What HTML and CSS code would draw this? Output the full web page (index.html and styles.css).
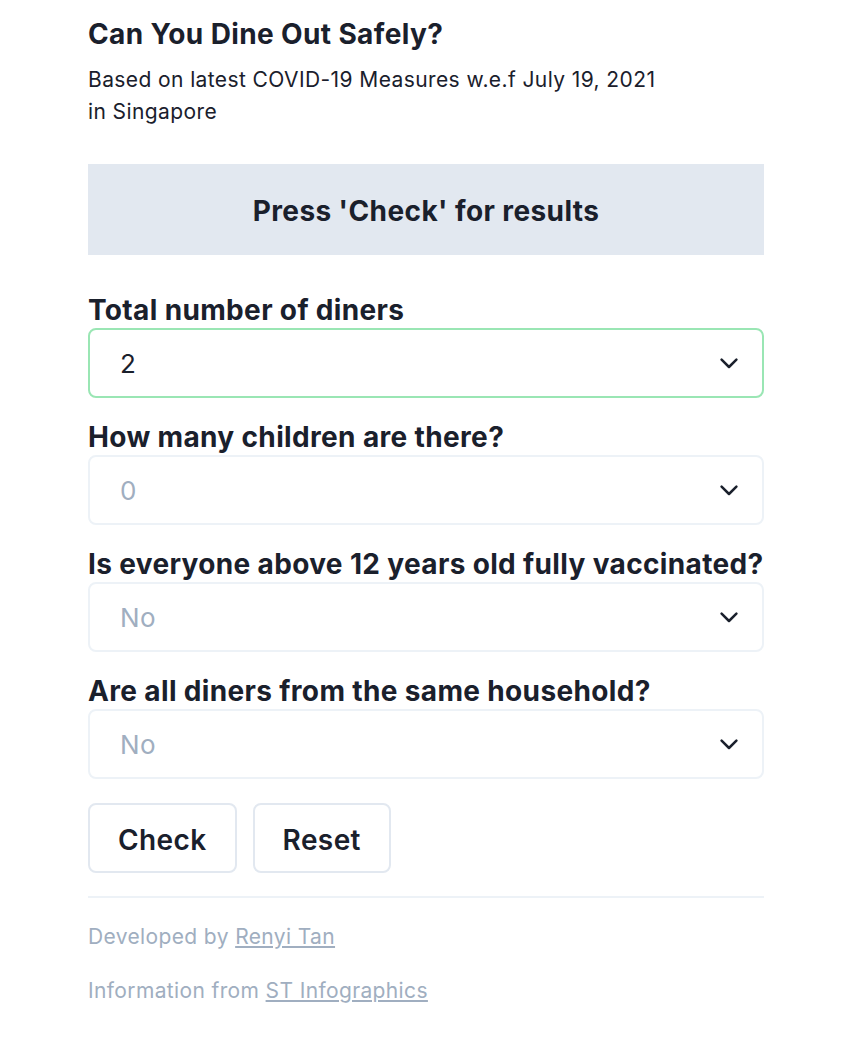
FILE: index.html
```html
<!DOCTYPE html>
<html lang="en">
<head>
<meta charset="utf-8">
<title>Can You Dine Out Safely?</title>
<link rel="stylesheet" href="styles.css">
</head>
<body>
<main class="page">
  <h1 class="title">Can You Dine Out Safely?</h1>
  <p class="subtitle">Based on latest COVID-19 Measures w.e.f July 19, 2021<br>in Singapore</p>

  <div class="result">Press 'Check' for results</div>

  <form class="form">
    <div class="field">
      <label class="label">Total number of diners</label>
      <div class="select focused">
        <span class="value">2</span>
        <svg class="chev" viewBox="0 0 18 11" width="18" height="11"><path d="M1.6 1.6L9 9l7.4-7.4" fill="none" stroke="#1a202c" stroke-width="2.5" stroke-linecap="round" stroke-linejoin="round"/></svg>
      </div>
    </div>
    <div class="field">
      <label class="label">How many children are there?</label>
      <div class="select">
        <span class="value muted">0</span>
        <svg class="chev" viewBox="0 0 18 11" width="18" height="11"><path d="M1.6 1.6L9 9l7.4-7.4" fill="none" stroke="#1a202c" stroke-width="2.5" stroke-linecap="round" stroke-linejoin="round"/></svg>
      </div>
    </div>
    <div class="field">
      <label class="label">Is everyone above 12 years old fully vaccinated?</label>
      <div class="select">
        <span class="value muted">No</span>
        <svg class="chev" viewBox="0 0 18 11" width="18" height="11"><path d="M1.6 1.6L9 9l7.4-7.4" fill="none" stroke="#1a202c" stroke-width="2.5" stroke-linecap="round" stroke-linejoin="round"/></svg>
      </div>
    </div>
    <div class="field">
      <label class="label">Are all diners from the same household?</label>
      <div class="select">
        <span class="value muted">No</span>
        <svg class="chev" viewBox="0 0 18 11" width="18" height="11"><path d="M1.6 1.6L9 9l7.4-7.4" fill="none" stroke="#1a202c" stroke-width="2.5" stroke-linecap="round" stroke-linejoin="round"/></svg>
      </div>
    </div>
    <div class="buttons">
      <button type="button" class="btn btn-check">Check</button>
      <button type="button" class="btn btn-reset">Reset</button>
    </div>
  </form>

  <hr class="divider">

  <footer class="footer">
    <p class="credit">Developed by <a href="#">Renyi Tan</a></p>
    <p class="credit">Information from <a href="#">ST Infographics</a></p>
  </footer>
</main>
</body>
</html>
```

FILE: styles.css
```css
* { box-sizing: border-box; }
html, body { margin: 0; padding: 0; background: #ffffff; }
body {
  font-family: Inter, "Noto Sans", "Liberation Sans", sans-serif;
  color: #1a202c;
}
.page {
  width: 676px;
  margin: 0 auto;
  padding-top: 17px;
}
.title {
  margin: 0;
  font-size: 28px;
  line-height: 34px;
  font-weight: 700;
  letter-spacing: 0.37px;
}
.subtitle {
  margin: 13px 0 0;
  font-size: 21px;
  line-height: 32px;
  font-weight: 400;
  letter-spacing: 0.4px;
}
.result {
  margin-top: 36px;
  height: 91px;
  padding-top: 3px;
  background: #e2e8f0;
  display: flex;
  align-items: center;
  justify-content: center;
  font-size: 28px;
  font-weight: 700;
  letter-spacing: 0.4px;
}
.form {
  margin-top: 37px;
  display: flex;
  flex-direction: column;
  gap: 21px;
}
.field {
  display: flex;
  flex-direction: column;
}
.label {
  font-size: 28px;
  line-height: 36px;
  font-weight: 700;
  letter-spacing: 0.35px;
}
.select {
  height: 70px;
  border: 2px solid #edf2f7;
  border-radius: 8px;
  display: flex;
  align-items: center;
  justify-content: space-between;
  padding: 0 24px 0 30px;
}
.select.focused { border-color: #9ae6b4; }
.value { font-size: 26px; color: #1a202c; letter-spacing: 0.3px; }
.value.muted { color: #a0aec0; }
.chev { display: block; }
.buttons {
  display: flex;
  gap: 16px;
  margin-top: 3px;
}
.btn {
  height: 70px;
  background: #ffffff;
  border: 2px solid #e2e8f0;
  border-radius: 8px;
  font-family: inherit;
  font-size: 28px;
  font-weight: 600;
  letter-spacing: 0.4px;
  color: #1a202c;
  padding: 3px 28px 0;
}
.divider {
  margin: 23px 0 0;
  border: 0;
  border-top: 2px solid #edf2f7;
}
.footer { padding-top: 23px; }
.credit {
  margin: 0 0 22px;
  font-size: 21px;
  line-height: 32px;
  color: #a0aec0;
  letter-spacing: 0.37px;
}
.credit a { color: #a0aec0; text-decoration: underline; }
```
